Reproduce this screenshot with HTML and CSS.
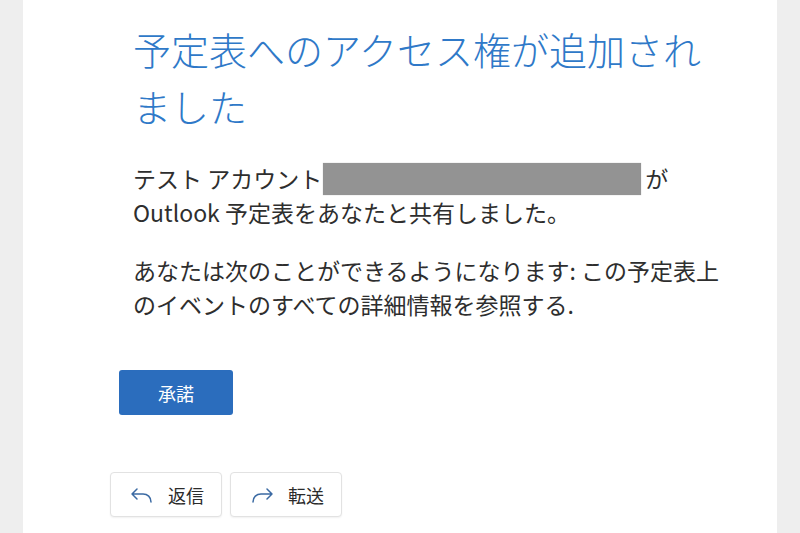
FILE: index.html
```html
<!DOCTYPE html>
<html lang="ja">
<head>
<meta charset="utf-8">
<link rel="stylesheet" href="styles.css">
</head>
<body>
<div class="page">
  <main class="card">
    <h1 class="title">予定表へのアクセス権が追加されました</h1>
    <p class="para">テスト アカウント <span class="redact"></span>が<br>Outlook 予定表をあなたと共有しました。</p>
    <p class="para">あなたは次のことができるようになります: この予定表上<br>のイベントのすべての詳細情報を参照する.</p>
    <button class="accept">承諾</button>
    <div class="actions">
      <button class="action">
        <svg class="icon" viewBox="0 0 24 20" width="24" height="20"><path d="M7 4 L2 9 L7 14 M2 9 H13 C17.5 9 21 12 21 17" fill="none" stroke="#3b6aa3" stroke-width="1.5" stroke-linecap="round" stroke-linejoin="round"/></svg>
        <span>返信</span>
      </button>
      <button class="action">
        <svg class="icon" viewBox="0 0 24 20" width="24" height="20"><path d="M17 4 L22 9 L17 14 M22 9 H11 C6.5 9 3 12 3 17" fill="none" stroke="#3b6aa3" stroke-width="1.5" stroke-linecap="round" stroke-linejoin="round"/></svg>
        <span>転送</span>
      </button>
    </div>
  </main>
</div>
</body>
</html>
```
FILE: styles.css
```css
html, body {
  margin: 0;
  padding: 0;
  height: 100%;
}
body {
  background: #eeeeee;
  font-family: "Noto Sans CJK JP", "Noto Sans", sans-serif;
  overflow: hidden;
}
.page {
  height: 100%;
  padding: 0 23px;
}
.card {
  background: #ffffff;
  height: 100%;
  padding: 20px 0 0 87px;
  box-sizing: border-box;
}
.title {
  margin: 0 0 0 23px;
  width: 592px;
  font-size: 38px;
  line-height: 57px;
  font-weight: 300;
  color: #2f79c8;
}
.para {
  margin: 27px 0 0 23px;
  width: 640px;
  font-size: 23px;
  line-height: 34px;
  color: #2e2e2e;
}
.para + .para {
  margin-top: 24px;
}
.redact {
  display: inline-block;
  width: 318px;
  height: 32px;
  background: #939393;
  vertical-align: -7px;
  margin: 0 4px 0 -4px;
  box-shadow: 0 0 1px rgba(0,0,0,0.25);
}
.accept {
  display: block;
  margin: 49px 0 0 9px;
  width: 114px;
  height: 45px;
  border: none;
  border-radius: 3px;
  background: #2b6dbd;
  color: #ffffff;
  font-family: inherit;
  font-size: 18px;
  padding: 0;
}
.actions {
  display: flex;
  gap: 8px;
  margin-top: 57px;
}
.action {
  display: flex;
  align-items: center;
  gap: 14px;
  width: 112px;
  height: 45px;
  box-sizing: border-box;
  padding: 0 0 0 19px;
  background: #ffffff;
  border: 1px solid #e2e2e2;
  border-radius: 4px;
  box-shadow: 0 1px 2px rgba(0,0,0,0.06);
  font-family: inherit;
  font-size: 18px;
  color: #2b2b2b;
}
.icon {
  display: block;
  flex: none;
}
```
